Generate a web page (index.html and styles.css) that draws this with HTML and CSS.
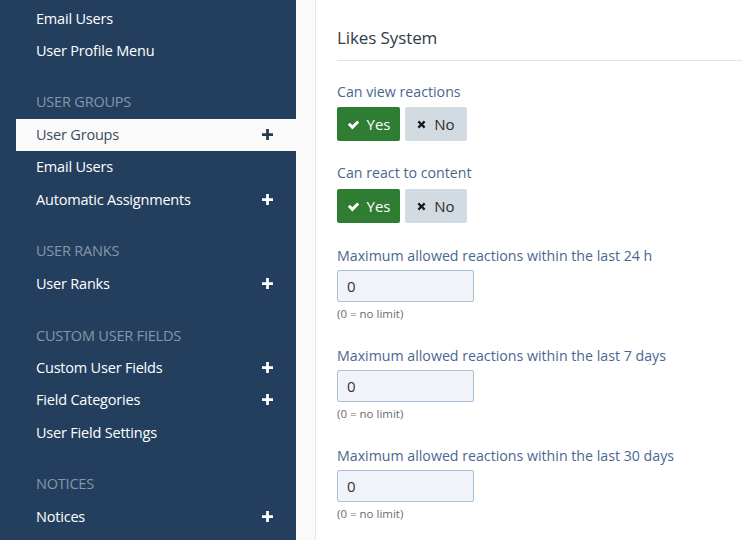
FILE: index.html
```html
<!DOCTYPE html>
<html>
<head>
<meta charset="utf-8">
<link rel="stylesheet" href="styles.css">
</head>
<body>
<div class="page">
  <nav class="sidebar">
    <ul class="nav-list">
      <li class="nav-item"><span>Email Users</span></li>
      <li class="nav-item"><span>User Profile Menu</span></li>
    </ul>
    <div class="nav-head">USER GROUPS</div>
    <ul class="nav-list">
      <li class="nav-item active"><span>User Groups</span><svg class="plus" viewBox="0 0 12 12"><path d="M4.5 0h3v4.5H12v3H7.5V12h-3V7.5H0v-3h4.5z"/></svg></li>
      <li class="nav-item"><span>Email Users</span></li>
      <li class="nav-item"><span>Automatic Assignments</span><svg class="plus" viewBox="0 0 12 12"><path d="M4.5 0h3v4.5H12v3H7.5V12h-3V7.5H0v-3h4.5z"/></svg></li>
    </ul>
    <div class="nav-head">USER RANKS</div>
    <ul class="nav-list">
      <li class="nav-item"><span>User Ranks</span><svg class="plus" viewBox="0 0 12 12"><path d="M4.5 0h3v4.5H12v3H7.5V12h-3V7.5H0v-3h4.5z"/></svg></li>
    </ul>
    <div class="nav-head">CUSTOM USER FIELDS</div>
    <ul class="nav-list">
      <li class="nav-item"><span>Custom User Fields</span><svg class="plus" viewBox="0 0 12 12"><path d="M4.5 0h3v4.5H12v3H7.5V12h-3V7.5H0v-3h4.5z"/></svg></li>
      <li class="nav-item"><span>Field Categories</span><svg class="plus" viewBox="0 0 12 12"><path d="M4.5 0h3v4.5H12v3H7.5V12h-3V7.5H0v-3h4.5z"/></svg></li>
      <li class="nav-item"><span>User Field Settings</span></li>
    </ul>
    <div class="nav-head">NOTICES</div>
    <ul class="nav-list">
      <li class="nav-item"><span>Notices</span><svg class="plus" viewBox="0 0 12 12"><path d="M4.5 0h3v4.5H12v3H7.5V12h-3V7.5H0v-3h4.5z"/></svg></li>
    </ul>
  </nav>
  <div class="gutter"></div>
  <main class="content">
    <h2 class="section-title">Likes System</h2>

    <div class="field">
      <div class="label">Can view reactions</div>
      <div class="toggle">
        <span class="btn btn-yes"><svg class="ico" viewBox="0 0 14 12"><path d="M0.8 6.4l2.3-2.3 2.7 2.7L11 1.6l2.3 2.3-7.5 7.5z"/></svg>Yes</span>
        <span class="btn btn-no"><svg class="ico ico-x" viewBox="0 0 10 10"><path d="M0.6 2.4l1.8-1.8L5 3.2 7.6 0.6l1.8 1.8L6.8 5l2.6 2.6-1.8 1.8L5 6.8 2.4 9.4 0.6 7.6 3.2 5z"/></svg>No</span>
      </div>
    </div>

    <div class="field second">
      <div class="label">Can react to content</div>
      <div class="toggle">
        <span class="btn btn-yes"><svg class="ico" viewBox="0 0 14 12"><path d="M0.8 6.4l2.3-2.3 2.7 2.7L11 1.6l2.3 2.3-7.5 7.5z"/></svg>Yes</span>
        <span class="btn btn-no"><svg class="ico ico-x" viewBox="0 0 10 10"><path d="M0.6 2.4l1.8-1.8L5 3.2 7.6 0.6l1.8 1.8L6.8 5l2.6 2.6-1.8 1.8L5 6.8 2.4 9.4 0.6 7.6 3.2 5z"/></svg>No</span>
      </div>
    </div>

    <div class="field num first-num">
      <div class="label">Maximum allowed reactions within the last 24 h</div>
      <div class="input">0</div>
      <div class="hint">(0 = no limit)</div>
    </div>

    <div class="field num">
      <div class="label">Maximum allowed reactions within the last 7 days</div>
      <div class="input">0</div>
      <div class="hint">(0 = no limit)</div>
    </div>

    <div class="field num">
      <div class="label">Maximum allowed reactions within the last 30 days</div>
      <div class="input">0</div>
      <div class="hint">(0 = no limit)</div>
    </div>
  </main>
</div>
</body>
</html>
```

FILE: styles.css
```css
* { box-sizing: border-box; }
html, body {
  margin: 0;
  padding: 0;
  height: 540px;
  overflow: hidden;
}
body {
  font-family: "Open Sans", "Noto Sans", sans-serif;
  background: #ffffff;
}
.page {
  display: flex;
  height: 540px;
}
.sidebar {
  width: 296px;
  flex: none;
  background: #243f5e;
  padding: 2px 0 0 16px;
}
.nav-list {
  list-style: none;
  margin: 0;
  padding: 0;
}
.nav-item {
  display: flex;
  align-items: center;
  justify-content: space-between;
  height: 32.2px;
  padding: 0 23px 0 20px;
  color: #ffffff;
  font-size: 14.5px;
  letter-spacing: -0.2px;
}
.nav-item.active {
  background: #fafafa;
  color: #3b4a5c;
}
.plus {
  width: 11px;
  height: 11px;
  fill: #ffffff;
}
.active .plus { fill: #2a3a4e; }
.nav-head {
  margin-top: 20px;
  height: 32.2px;
  line-height: 32px;
  padding-left: 20px;
  color: #8596ab;
  font-size: 14.5px;
  letter-spacing: -0.2px;
}
.gutter {
  width: 20px;
  flex: none;
  background: #fafafa;
  border-right: 1px solid #e6e9ec;
}
.content {
  flex: 1;
  padding: 0 0 0 21px;
}
.section-title {
  margin: 25px 0 0;
  padding-bottom: 9px;
  font-size: 17px;
  font-weight: normal;
  color: #333b45;
  line-height: 26px;
  border-bottom: 1px solid #e2e2e2;
  letter-spacing: -0.1px;
}
.field { margin-top: 21px; }
.field.second { margin-top: 22px; }
.label {
  font-size: 14.2px;
  line-height: 20px;
  color: #4a6790;
}
.toggle {
  display: flex;
  gap: 5px;
  margin-top: 5px;
}
.second .toggle { margin-top: 6px; }
.btn {
  display: inline-flex;
  align-items: center;
  justify-content: center;
  height: 34px;
  font-size: 15px;
  border-radius: 2px;
}
.btn-yes {
  width: 63px;
  background: #2e7d32;
  color: #ffffff;
}
.btn-no {
  width: 62px;
  background: #d3dbe2;
  color: #2d2d2d;
}
.ico {
  width: 13px;
  height: 11px;
  fill: #ffffff;
  margin-right: 7px;
}
.ico-x {
  width: 9px;
  height: 9px;
  fill: #1a1a1a;
  margin-right: 8px;
}
.field.num { margin-top: 24px; }
.field.first-num { margin-top: 23px; }
.input {
  margin-top: 4px;
  width: 137px;
  height: 32px;
  line-height: 30px;
  padding-left: 9px;
  background: #f0f4f9;
  border: 1px solid #a9bfd6;
  border-radius: 2px;
  font-size: 15px;
  color: #333;
}
.hint {
  font-size: 11.5px;
  line-height: 16px;
  margin-top: 4px;
  color: #6b6b6b;
}
```
